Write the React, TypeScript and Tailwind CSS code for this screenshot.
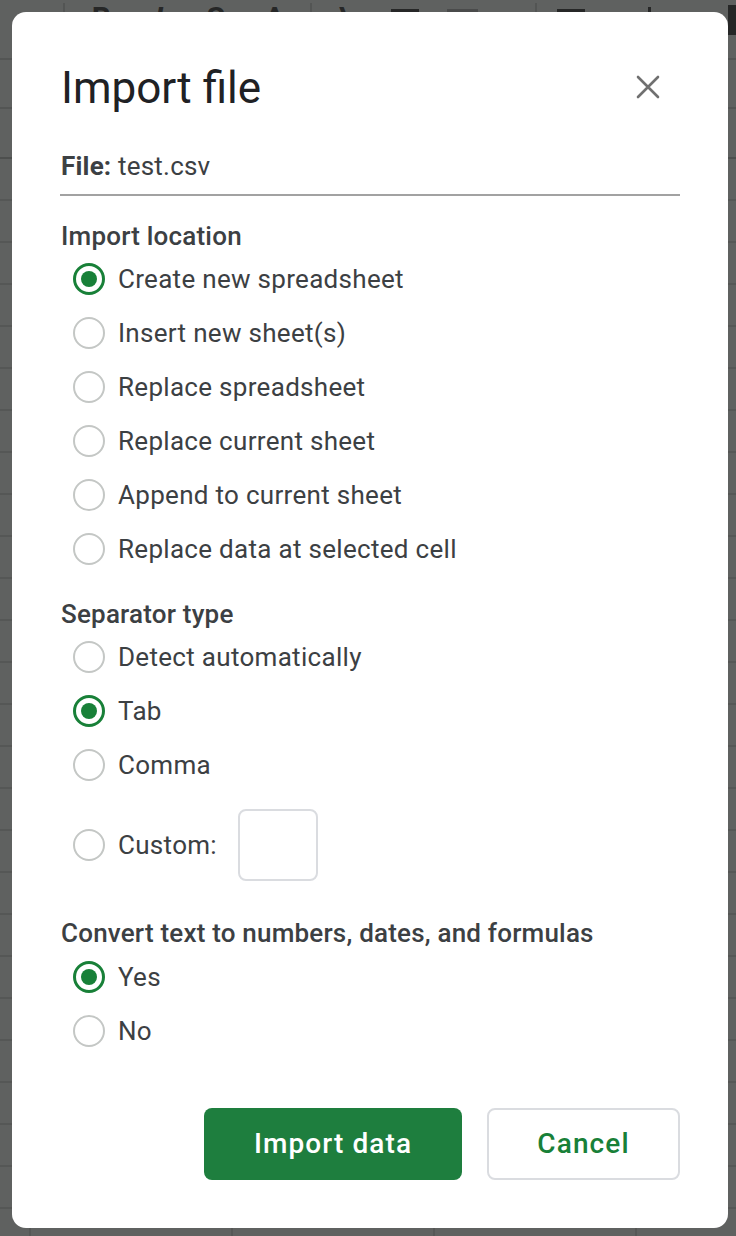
import React from "react";

const font = { fontFamily: "Roboto, 'Noto Sans', Arial, sans-serif" };

function Radio({ checked }: { checked?: boolean }) {
  return checked ? (
    <span className="flex h-[32px] w-[32px] shrink-0 items-center justify-center rounded-full border-[3px] border-[#188038]">
      <span className="h-[16px] w-[16px] rounded-full bg-[#188038]" />
    </span>
  ) : (
    <span className="h-[32px] w-[32px] shrink-0 rounded-full border-2 border-[#c4c7c5]" />
  );
}

function Option({ label, checked }: { label: string; checked?: boolean }) {
  return (
    <div className="flex h-[54px] items-center gap-[13px] pl-[13px]">
      <Radio checked={checked} />
      <span className="text-[26px] leading-[32px] tracking-[0.3px] text-[#3c4043]">{label}</span>
    </div>
  );
}

function Heading({ children, className = "" }: { children: React.ReactNode; className?: string }) {
  return (
    <div className={"text-[26px] font-medium leading-[32px] tracking-[0.2px] text-[#3c4043] " + className}>
      {children}
    </div>
  );
}

function Background() {
  const rows = Array.from({ length: 26 });
  return (
    <div className="flex flex-col">
      <div className="flex h-[60px] items-start border-b-2 border-[#535554] pt-[3px] text-[30px] font-bold leading-[30px] text-[#262727]">
        <div className="h-[40px] w-[65px] border-r-2 border-[#535554]" />
        <span className="ml-[27px] w-[63px]">B</span>
        <span className="w-[52px] italic">I</span>
        <span className="w-[58px] line-through">S</span>
        <span className="w-[30px]">A</span>
        <div className="ml-[16px] h-[40px] w-[2px] bg-[#535554]" />
        <span className="ml-[27px] w-[52px]">\</span>
        <div className="mt-[6px] h-[20px] w-[28px] bg-[#262727]" />
        <div className="ml-[28px] mt-[6px] h-[20px] w-[31px] bg-[#4a4b4b]" />
        <div className="ml-[57px] h-[40px] w-[2px] bg-[#535554]" />
        <div className="ml-[20px] mt-[6px] h-[16px] w-[28px] bg-[#262727]" />
        <div className="ml-[63px] mt-[4px] h-[24px] w-[3px] bg-[#262727]" />
        <div className="ml-[77px] mt-[2px] h-[30px] w-[8px] bg-[#262727]" />
      </div>
      <div className="h-[49px] border-b-2 border-[#535554]" />
      <div className="h-[50px] border-b-2 border-[#4d4f4e]" />
      {rows.map((_, i) => (
        <div key={i} className="flex h-[42px] border-b-2 border-[#555756]">
          <div className="w-[31px] border-r-2 border-[#555756]" />
          <div className="w-[202px] border-r-2 border-[#555756]" />
          <div className="w-[202px] border-r-2 border-[#555756]" />
          <div className="w-[202px] border-r-2 border-[#555756]" />
          <div className="flex-1" />
        </div>
      ))}
    </div>
  );
}

export default function App() {
  return (
    <div className="relative h-[1236px] w-full overflow-hidden bg-[#5f6160]" style={font}>
      <Background />
      <div className="absolute left-[12px] top-[12px] flex h-[1216px] w-[716px] flex-col rounded-[14px] bg-white px-[48px] pt-[50px]">
        <div className="flex items-center justify-between">
          <h1 className="pl-[1px] text-[44px] font-normal leading-[52px] text-[#202124]">Import file</h1>
          <svg width="24" height="24" viewBox="0 0 24 24" className="mr-[20px] -mt-[2px]" aria-label="Close">
            <path d="M2 2 L22 22 M22 2 L2 22" stroke="#707070" strokeWidth="2.6" strokeLinecap="round" />
          </svg>
        </div>

        <div className="mt-[36px] border-b-2 border-[#a2a2a2] pb-[12px] pl-[1px] text-[26px] leading-[32px] tracking-[0.2px] text-[#3c4043]">
          <span className="font-bold">File:</span> test.csv
        </div>

        <Heading className="mt-[24px] pl-[1px]">Import location</Heading>
        <div className="flex flex-col">
          <Option label="Create new spreadsheet" checked />
          <Option label="Insert new sheet(s)" />
          <Option label="Replace spreadsheet" />
          <Option label="Replace current sheet" />
          <Option label="Append to current sheet" />
          <Option label="Replace data at selected cell" />
        </div>

        <Heading className="mt-[22px] pl-[1px]">Separator type</Heading>
        <div className="flex flex-col">
          <Option label="Detect automatically" />
          <Option label="Tab" checked />
          <Option label="Comma" />
          <div className="mt-[17px] flex h-[72px] items-center pl-[13px]">
            <Radio />
            <span className="ml-[13px] text-[26px] leading-[32px] tracking-[0.3px] text-[#3c4043]">Custom:</span>
            <div className="ml-[21px] h-[72px] w-[80px] rounded-[8px] border-2 border-[#dadce0]" />
          </div>
        </div>

        <Heading className="mt-[36px] pl-[1px]">Convert text to numbers, dates, and formulas</Heading>
        <div className="mt-[1px] flex flex-col">
          <Option label="Yes" checked />
          <Option label="No" />
        </div>

        <div className="mt-[50px] flex justify-end gap-[25px]">
          <button className="h-[72px] w-[258px] rounded-[8px] bg-[#1e7e3e] text-[28px] font-medium tracking-[1.1px] text-white">
            Import data
          </button>
          <button className="h-[72px] w-[193px] rounded-[8px] border-2 border-[#dadce0] bg-white text-[28px] font-medium tracking-[1.1px] text-[#188038]">
            Cancel
          </button>
        </div>
      </div>
    </div>
  );
}
